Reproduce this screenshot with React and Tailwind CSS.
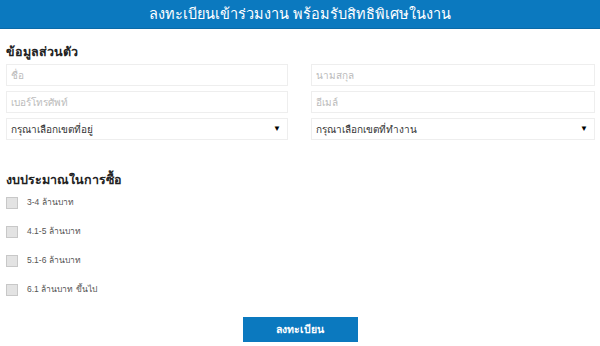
export default function App() {
    const budgets = ["3-4 ล้านบาท", "4.1-5 ล้านบาท", "5.1-6 ล้านบาท", "6.1 ล้านบาท ขึ้นไป"];

    return (
        <div className="w-[600px] h-[346px] bg-white font-['Liberation_Sans',Tahoma,sans-serif] overflow-hidden">
            <div className="h-[29px] bg-[#0b79bf] border-b border-[#0a6aa8] flex items-center justify-center">
                <h1 className="text-white text-[14.5px] leading-none">ลงทะเบียนเข้าร่วมงาน พร้อมรับสิทธิพิเศษในงาน</h1>
            </div>

            <div className="px-[6px]">
                <h2 className="mt-[14px] text-[12.5px] font-bold text-[#222] leading-[18px]">ข้อมูลส่วนตัว</h2>
                <div className="mt-[3px] grid grid-cols-[282px_284px] gap-x-[23px] gap-y-[5px]">
                    <input className="h-[22px] border border-[#eeeeee] px-[4px] text-[10px] placeholder:text-[#bbb] outline-none" placeholder="ชื่อ" />
                    <input className="h-[22px] border border-[#eeeeee] px-[4px] text-[10px] placeholder:text-[#bbb] outline-none" placeholder="นามสกุล" />
                    <input className="h-[22px] border border-[#eeeeee] px-[4px] text-[10px] placeholder:text-[#bbb] outline-none" placeholder="เบอร์โทรศัพท์" />
                    <input className="h-[22px] border border-[#eeeeee] px-[4px] text-[10px] placeholder:text-[#bbb] outline-none" placeholder="อีเมล์" />
                    <div className="h-[22px] border border-[#eeeeee] px-[4px] flex items-center justify-between text-[10px] text-[#333]">
                        <span>กรุณาเลือกเขตที่อยู่</span>
                        <span className="text-[8px] text-black mr-[2px]">▼</span>
                    </div>
                    <div className="h-[22px] border border-[#eeeeee] px-[4px] flex items-center justify-between text-[10px] text-[#333]">
                        <span>กรุณาเลือกเขตที่ทำงาน</span>
                        <span className="text-[8px] text-black mr-[2px]">▼</span>
                    </div>
                </div>

                <h2 className="mt-[31px] text-[12.5px] font-bold text-[#222] leading-[18px]">งบประมาณในการซื้อ</h2>
                <div className="mt-[7px] flex flex-col gap-[16px]">
                    {budgets.map(b => (
                        <label key={b} className="flex items-center gap-[9px] h-[13px]">
                            <span className="w-[12px] h-[12px] bg-[#e3e3e3] border border-[#c8c8c8]" />
                            <span className="text-[8.5px] text-[#555]">{b}</span>
                        </label>
                    ))}
                </div>

                <div className="mt-[21px] flex justify-center">
                    <button className="w-[115px] h-[25px] bg-[#0b79bf] text-white text-[10.5px] font-bold">ลงทะเบียน</button>
                </div>
            </div>
        </div>
    );
}
